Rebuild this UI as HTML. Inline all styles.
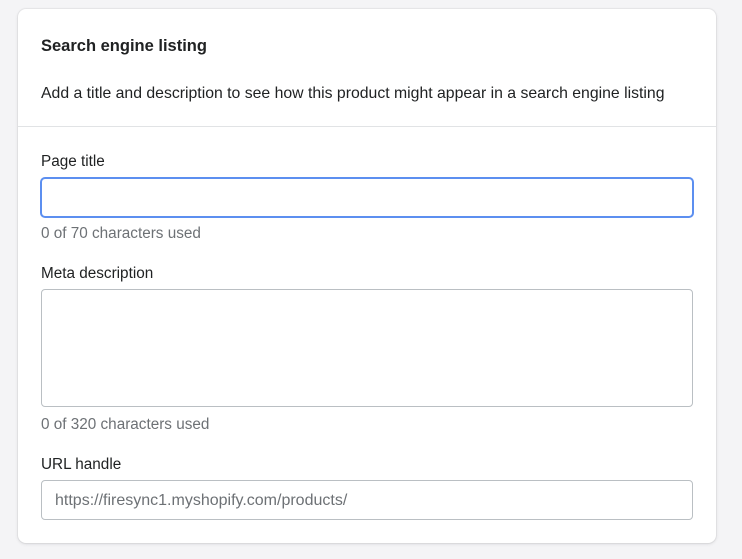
<!DOCTYPE html>
<html><head><style>
body{margin:0;width:742px;height:559px;background:#f4f4f6;font-family:"Liberation Sans",sans-serif;color:#202223;position:relative;overflow:hidden}
.card{position:absolute;left:18px;top:9px;width:698px;height:534px;background:#fff;border-radius:8px;box-shadow:0 0 0 1px rgba(63,63,68,.05),0 1px 3px rgba(63,63,68,.15)}
.t{position:absolute;left:41px;white-space:nowrap}
.hr{position:absolute;left:18px;width:698px;top:126px;height:1px;background:#e1e3e5}
.box{position:absolute;left:41px;width:650px;border:1px solid #babfc3;border-radius:4px;background:#fff}
.help{color:#6d7175;font-size:15.3px}
</style></head><body>
<div class="card"></div>
<div class="t" style="top:37px;font-size:16.5px;font-weight:bold;color:#202223">Search engine listing</div>
<div class="t" style="top:85px;font-size:15.8px">Add a title and description to see how this product might appear in a search engine listing</div>
<div class="hr"></div>
<div class="t" style="top:153px;font-size:15.3px">Page title</div>
<div class="box" style="left:40px;top:177px;width:650px;height:37px;border:2px solid #5c8ff0;border-radius:5px"></div>
<div class="t help" style="top:225px">0 of 70 characters used</div>
<div class="t" style="top:265px;font-size:15.3px">Meta description</div>
<div class="box" style="top:289px;height:116px"></div>
<div class="t help" style="top:416px">0 of 320 characters used</div>
<div class="t" style="top:456px;font-size:15.3px">URL handle</div>
<div class="box" style="top:480px;height:38px"></div>
<div class="t" style="left:55px;top:492px;font-size:16px;color:#6d7175">https://firesync1.myshopify.com/products/</div>
</body></html>
